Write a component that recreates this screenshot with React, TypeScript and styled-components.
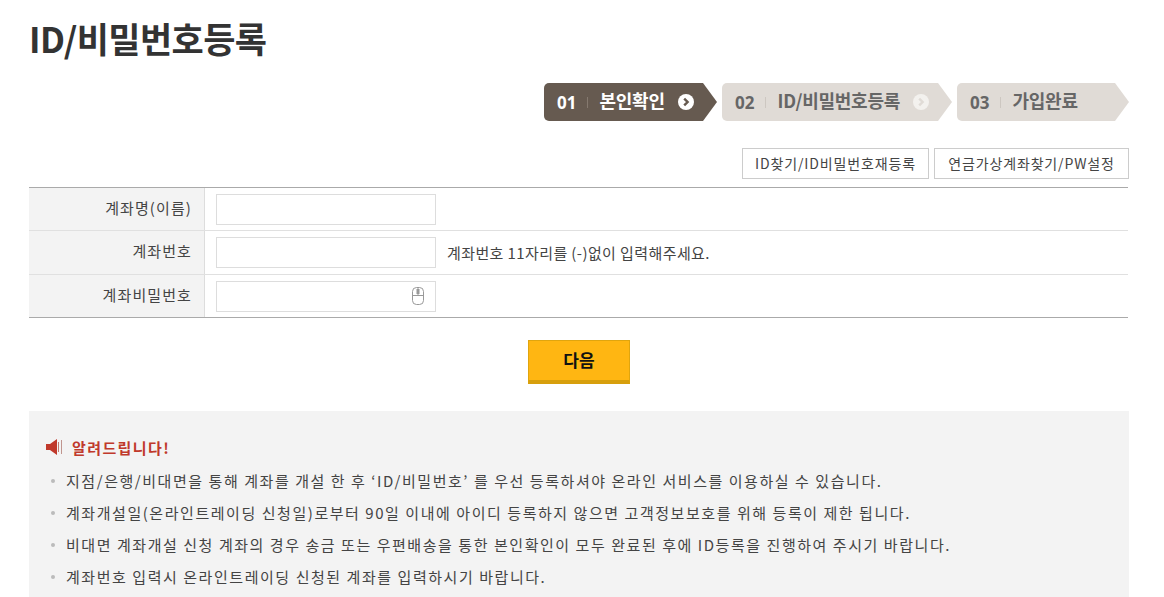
import React from 'react'
import styled, { createGlobalStyle } from 'styled-components'

const GlobalStyle = createGlobalStyle`
  html, body {
    margin: 0;
    padding: 0;
    background: #fff;
    overflow: hidden;
  }
  body {
    font-family: "Noto Sans CJK KR", "Noto Sans", sans-serif;
    color: #333;
  }
`

const Page = styled.div`
  width: 1100px;
  height: 597px;
  overflow: hidden;
  padding: 14px 35px 0 29px;
`

const Title = styled.h1`
  margin: 0;
  height: 48px;
  font-size: 35px;
  line-height: 48px;
  font-weight: 700;
  color: #333;
  letter-spacing: -0.6px;
`

const Steps = styled.ol`
  list-style: none;
  margin: 21px 0 0;
  padding: 0;
  display: flex;
  justify-content: flex-end;
  gap: 5px;
`

const Step = styled.li<{ $active?: boolean; $width: number }>`
  width: ${({ $width }) => $width}px;
  height: 38px;
  box-sizing: border-box;
  display: flex;
  align-items: center;
  padding-left: 13px;
  border-radius: 5px 0 0 5px;
  clip-path: polygon(0 0, calc(100% - 14px) 0, 100% 50%, calc(100% - 14px) 100%, 0 100%);
  background: ${({ $active }) => ($active ? '#665a50' : '#e0dbd6')};
  color: ${({ $active }) => ($active ? '#fff' : '#666')};
  font-size: 18px;
  font-weight: 700;
`

const StepNumber = styled.span`
  font-family: "Open Sans", sans-serif;
  font-size: 17px;
`

const StepDivider = styled.i<{ $active?: boolean }>`
  width: 1px;
  height: 11px;
  margin: 0 11px 0 11px;
  background: ${({ $active }) => ($active ? '#85796f' : '#cdc7c1')};
`

const StepName = styled.span`
  position: relative;
  top: -2px;
  letter-spacing: -0.25px;
`

const StepMark = styled.svg<{ $active?: boolean }>`
  width: 16px;
  height: 16px;
  margin-left: 13px;
  fill: ${({ $active }) => ($active ? '#fff' : '#f3f1ee')};
  stroke: ${({ $active }) => ($active ? '#665a50' : '#e0dbd6')};
`

const LinkRow = styled.div`
  display: flex;
  justify-content: flex-end;
  gap: 5px;
  margin-top: 27px;
`

const LinkButton = styled.a<{ $width: number }>`
  width: ${({ $width }) => $width}px;
  height: 31px;
  box-sizing: border-box;
  border: 1px solid #ccc;
  background: #fff;
  color: #444;
  font-size: 14px;
  line-height: 28px;
  letter-spacing: 0.85px;
  text-align: center;
`

const FormTable = styled.div`
  width: 1099px;
  margin-top: 8px;
  border-top: 1px solid #aaa;
  border-bottom: 1px solid #aaa;
`

const FormRow = styled.div<{ $height: number }>`
  display: flex;
  height: ${({ $height }) => $height}px;
  box-sizing: border-box;
  & + & {
    border-top: 1px solid #e0e0e0;
  }
`

const FormLabel = styled.label`
  width: 176px;
  box-sizing: border-box;
  flex: none;
  padding-right: 12px;
  border-right: 1px solid #ddd;
  background: #f3f3f3;
  color: #444;
  font-size: 15px;
  line-height: 40px;
  letter-spacing: 1.1px;
  text-align: right;
`

const FormField = styled.div`
  flex: 1;
  display: flex;
  align-items: center;
  padding-left: 11px;
`

const InputBox = styled.div`
  position: relative;
  width: 220px;
  height: 31px;
  box-sizing: border-box;
  border: 1px solid #ddd;
  background: #fff;
`

const MouseIcon = styled.svg`
  position: absolute;
  right: 10px;
  top: 4px;
  width: 14px;
  height: 20px;
  fill: none;
  stroke: #999;
`

const FieldHint = styled.span`
  margin-left: 11px;
  color: #444;
  font-size: 15px;
  letter-spacing: 0.4px;
`

const SubmitRow = styled.div`
  display: flex;
  justify-content: center;
  margin-top: 22px;
`

const SubmitButton = styled.button`
  width: 102px;
  height: 44px;
  box-sizing: border-box;
  padding: 0 0 3px;
  border: 1px solid #e0a50e;
  border-bottom: 4px solid #d79f0d;
  background: #ffb612;
  color: #111;
  font-family: inherit;
  font-size: 17px;
  font-weight: 700;
`

const Notice = styled.section`
  width: 1100px;
  height: 186px;
  box-sizing: border-box;
  margin-top: 27px;
  padding: 23px 16px 0 17px;
  background: #f3f3f3;
`

const NoticeTitle = styled.h2`
  display: flex;
  align-items: center;
  gap: 8px;
  margin: 0;
  height: 26px;
  color: #c0392b;
  font-size: 15px;
  font-weight: 700;
  letter-spacing: 1.4px;
`

const NoticeList = styled.ul`
  list-style: none;
  margin: 5px 0 0;
  padding: 0;
`

const NoticeItem = styled.li`
  position: relative;
  height: 32px;
  padding-left: 20px;
  color: #444;
  font-size: 15px;
  line-height: 32px;
  letter-spacing: 1.55px;
  white-space: nowrap;
  &::before {
    content: '';
    position: absolute;
    left: 5px;
    top: 14px;
    width: 4px;
    height: 4px;
    border-radius: 50%;
    background: #bbb;
  }
`

const notices = [
  '지점/은행/비대면을 통해 계좌를 개설 한 후 ‘ID/비밀번호’ 를 우선 등록하셔야 온라인 서비스를 이용하실 수 있습니다.',
  '계좌개설일(온라인트레이딩 신청일)로부터 90일 이내에 아이디 등록하지 않으면 고객정보보호를 위해 등록이 제한 됩니다.',
  '비대면 계좌개설 신청 계좌의 경우 송금 또는 우편배송을 통한 본인확인이 모두 완료된 후에 ID등록을 진행하여 주시기 바랍니다.',
  '계좌번호 입력시 온라인트레이딩 신청된 계좌를 입력하시기 바랍니다.',
]

function ChevronMark({ active }: { active?: boolean }) {
  return (
    <StepMark $active={active} viewBox="0 0 16 16">
      <circle cx="8" cy="8" r="8" stroke="none" />
      <path d="M6.2 4.6 9.6 8l-3.4 3.4" fill="none" strokeWidth="2.4" />
    </StepMark>
  )
}

function Speaker() {
  return (
    <svg width="18" height="18" viewBox="0 0 18 18">
      <path d="M0 6h4l7-5v16l-7-5H0z" fill="#c0392b" />
      <path d="M12.5 4v10" stroke="#c0796e" strokeWidth="1" />
      <path d="M15.5 2v14" stroke="#c0958e" strokeWidth="1" />
    </svg>
  )
}

export default function App() {
  return (
    <Page>
      <GlobalStyle />
      <Title>ID/비밀번호등록</Title>
      <Steps>
        <Step $active $width={173}>
          <StepNumber>01</StepNumber>
          <StepDivider $active />
          <StepName>본인확인</StepName>
          <ChevronMark active />
        </Step>
        <Step $width={230}>
          <StepNumber>02</StepNumber>
          <StepDivider />
          <StepName>ID/비밀번호등록</StepName>
          <ChevronMark />
        </Step>
        <Step $width={172}>
          <StepNumber>03</StepNumber>
          <StepDivider />
          <StepName>가입완료</StepName>
        </Step>
      </Steps>
      <LinkRow>
        <LinkButton $width={187}>ID찾기/ID비밀번호재등록</LinkButton>
        <LinkButton $width={195}>연금가상계좌찾기/PW설정</LinkButton>
      </LinkRow>
      <FormTable>
        <FormRow $height={42}>
          <FormLabel>계좌명(이름)</FormLabel>
          <FormField>
            <InputBox />
          </FormField>
        </FormRow>
        <FormRow $height={44}>
          <FormLabel>계좌번호</FormLabel>
          <FormField>
            <InputBox />
            <FieldHint>계좌번호 11자리를 (-)없이 입력해주세요.</FieldHint>
          </FormField>
        </FormRow>
        <FormRow $height={43}>
          <FormLabel>계좌비밀번호</FormLabel>
          <FormField>
            <InputBox>
              <MouseIcon viewBox="0 0 14 20">
                <rect x="1.5" y="1.5" width="11" height="17" rx="4" />
                <path d="M1.5 9.5h11M7 1.5v8" />
                <rect x="5.5" y="3" width="3" height="5" fill="#999" stroke="none" />
              </MouseIcon>
            </InputBox>
          </FormField>
        </FormRow>
      </FormTable>
      <SubmitRow>
        <SubmitButton>다음</SubmitButton>
      </SubmitRow>
      <Notice>
        <NoticeTitle>
          <Speaker />
          알려드립니다!
        </NoticeTitle>
        <NoticeList>
          {notices.map((text) => (
            <NoticeItem key={text}>{text}</NoticeItem>
          ))}
        </NoticeList>
      </Notice>
    </Page>
  )
}
